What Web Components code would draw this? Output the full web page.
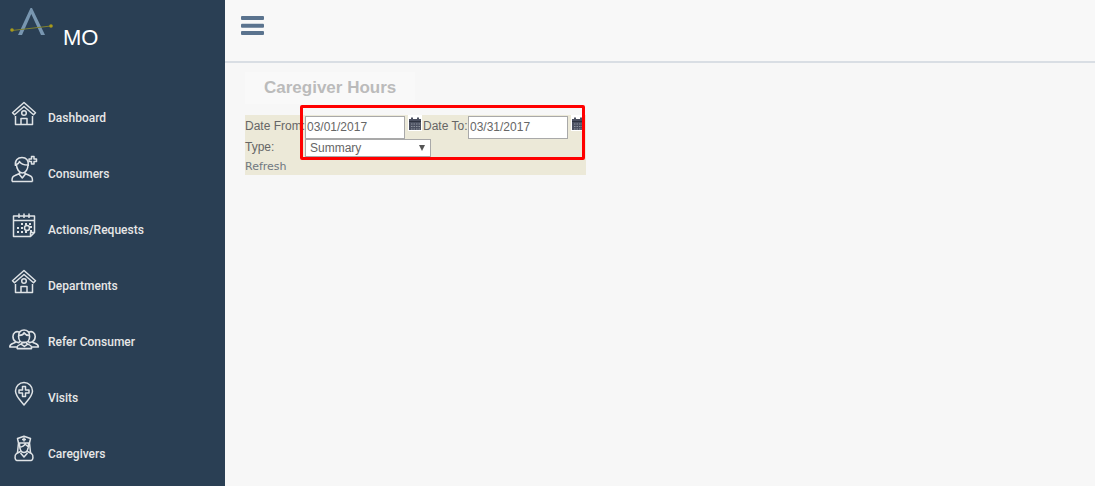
<!DOCTYPE html>
<html lang="en">
<head>
<meta charset="utf-8">
<meta name="viewport" content="width=device-width, initial-scale=1">
<title>Caregiver Hours</title>
<style>
  html, body { margin: 0; }
  body { background: #f7f7f7; color: #666; font: 12px/18px "Liberation Sans", Arial, sans-serif; }
</style>
</head>
<body>
<app-shell>
  <side-nav slot="nav">
    <nav-item icon="house">Dashboard</nav-item>
    <nav-item icon="person">Consumers</nav-item>
    <nav-item icon="calendar">Actions/Requests</nav-item>
    <nav-item icon="house">Departments</nav-item>
    <nav-item icon="group">Refer Consumer</nav-item>
    <nav-item icon="pin">Visits</nav-item>
    <nav-item icon="nurse">Caregivers</nav-item>
  </side-nav>
  <top-bar></top-bar>
  <page-title>Caregiver Hours</page-title>
  <hours-filter></hours-filter>
</app-shell>

<script>
const define = (name, html, setup) => {
  const template = document.createElement('template');
  template.innerHTML = html;
  customElements.define(name, class extends HTMLElement {
    constructor() {
      super();
      this.attachShadow({ mode: 'open' }).append(template.content.cloneNode(true));
    }
    connectedCallback() { if (setup) setup(this, this.shadowRoot); }
  });
};

const icons = {
  house: '<path d="M1.500 11.700 13 1.500l11.500 10.200-2 2L13 5.500l-9.500 8.200zM4.500 15v8.500h17V15M10 23.500v-6h6v6"/><circle cx="13" cy="12" r="2.300"/>',
  person: '<path d="M1 24.500c0-4 .5-5 3-6l4.500-2v-2M21.500 24.500c0-4-.5-5-3-6l-4.500-2v-2M1 24.500h20.500M8 17l3.300 4 3.200-4M4.500 9C3.500 3 7 .5 11 .5c4 0 7 2.500 6.300 8.500M5.500 7.500c0 4 2.500 8.500 5.800 8.500S17 12 17 8C12 8 9.500 6.500 8.500 4.500 8 6.300 7 7 5.500 7.500z"/><path d="M20.500-.5h2.500V2h2.500v2.500H23V7h-2.500V4.500H18V2h2.500z"/>',
  calendar: '<path d="M2.500 3h21v16.500l-4 4h-17zM2.500 7.500h21M19.500 23.500v-4h4M8 .5v4.500M13 .5v4.500M18 .5v4.500"/><circle cx="16" cy="15" r="2.500"/><path stroke-dasharray="2 2" stroke-width="2" d="M10 11h11M6 15h7M6 19h12M20 13v6"/>',
  group: '<g transform="translate(-0.700 0.800) scale(1.060)"><path d="M6.500 21.500v-1.500c0-2.500 5-2 5-4.500h3.500c0 2.500 5 2 5 4.500v1.500zM10.500 17.500l2.800 2 2.800-2M7.800 10C7.500 6 10 4 13 4s5.500 2 5.200 6c0 3.500-2.200 6-5.200 6s-5.200-2.500-5.200-6zM8.500 9c3 0 4-1 4.500-2.500 1 1.500 2.500 2.500 4.500 2.500M8.500 6C5.500 4.500 2.500 6.500 2.500 10c0 2 1 4 2.500 5C4.500 17-.5 16-.5 20H7M5 15l3 1 1.500-2M17.500 6c3-1.500 6 .5 6 4 0 2-1 4-2.500 5 .5 2 5.500 1 5.500 5H20M21 15l-3 1-1.500-2"/></g>',
  pin: '<path d="M13 24C9 19 4.500 15 4.500 10a8.500 8.500 0 0 1 17 0c0 5-4.500 9-8.500 14z"/><path d="M11.500 5.500h3V9H18v3h-3.500v3.500h-3V12H8V9h3.500z"/>',
  nurse: '<g transform="translate(0 -1.500)"><path d="M6.500 3 13 .7 19.500 3l-1 4.500h-11zM13 2v4M11 4h4M7.500 7.500 6.500 17M18.500 7.500l1 9.500M8.500 8c0 5 1.500 9 4.500 9s4.500-4 4.500-9M8.500 11.500c3 0 5-1.500 6-3.500M14.500 9l3 2.500M9.500 16l-4 2c-2.500 2-1.500 7 .5 7h14c2 0 3-5 .5-7l-4-2M9.500 17.500l3.500 4 3.500-4"/></g>'
};

define('app-shell', `
  <style>
    :host { display: grid; grid-template-columns: 225px minmax(0, 1fr); min-height: 100vh; }
    main { min-width: 0; }
  </style>
  <slot name="nav"></slot>
  <main><slot></slot></main>`);

define('side-nav', `
  <style>
    :host { display: flex; flex-direction: column; background: #2a3f54; color: #fff; }
    .brand { display: flex; align-items: flex-start; gap: 9px; padding: 6px 10px 0; height: 80px; }
    .brand svg { width: 44px; height: 32px; }
    .brand span { font-size: 22px; line-height: 26px; margin-top: 19px; }
  </style>
  <div class="brand">
    <svg viewBox="0 0 44 32" aria-hidden="true">
      <path d="M8 29 20.500 2h1.500L35 29h-4L21.300 8 12 29z" fill="#7896b0"/>
      <path d="M2 24.500 41 20" stroke="#80812f" fill="none"/>
      <circle cx="2" cy="24" r="1.800" fill="#a89a1b"/><circle cx="41" cy="20" r="1.800" fill="#a89a1b"/>
    </svg>
    <span>MO</span>
  </div>
  <nav aria-label="Main"><slot></slot></nav>`);

define('nav-item', `
  <style>
    :host { display: block; }
    a { display: flex; align-items: center; gap: 10px; height: 56px; padding: 0 10px; color: #e7e7e7;
        font-family: Roboto, sans-serif; font-weight: 500; text-decoration: none; }
    svg { width: 28px; height: 28px; overflow: visible; fill: none; stroke: #dfe3e6; stroke-width: 1.500; stroke-linejoin: round; }
    span { padding-top: 8px; }
  </style>
  <a href="#"><svg viewBox="-1 -1 28 28" aria-hidden="true"></svg><span><slot></slot></span></a>`,
  (host, root) => {
    root.querySelector('svg').innerHTML = icons[host.getAttribute('icon')];
  });

define('top-bar', `
  <style>
    :host { display: block; padding: 16px 16px 26px; border-bottom: 2px solid #d9dee4; background: #f8f8f8; }
    button { display: block; width: 23px; padding: 0; border: 0; background: none; }
    svg { display: block; }
  </style>
  <button type="button" aria-label="Toggle menu">
    <svg width="23" height="19" viewBox="0 0 23 19" fill="#5a738e" aria-hidden="true">
      <rect width="23" height="4" rx="1"/><rect y="7.700" width="23" height="4" rx="1"/><rect y="15" width="23" height="4" rx="1"/>
    </svg>
  </button>`);

define('page-title', `
  <style>
    :host { display: block; padding: 9px 20px 11px; }
    h1 { width: fit-content; margin: 0; padding: 0 19px; background: #f9f9f9; color: #bbb; font-size: 17px; line-height: 32px; }
  </style>
  <h1><slot></slot></h1>`);

define('hours-filter', `
  <style>
    :host { display: block; position: relative; width: 341px; margin-left: 20px; background: #ece9d8; }
    form { display: grid; grid-template-columns: 60px 1fr; grid-template-rows: 24px 18px 18px; }
    .dates { display: flex; align-items: flex-start; }
    .dates label { margin-left: 1px; width: 45px; }
    label { line-height: 22px; white-space: nowrap; }
    .type { line-height: 16px; }
    input, select { box-sizing: border-box; margin: 0; border: 1px solid #a9a9a9; background: #fff; color: #666; font: inherit; border-radius: 0; }
    input { width: 100px; height: 23px; margin-top: 1px; padding: 0 1px 2px; }
    .select { position: relative; width: 126px; }
    select { display: block; width: 100%; height: 18px; padding: 0 4px; line-height: 14px; appearance: none; }
    .select::after { content: ""; position: absolute; right: 6px; top: 6px; border: solid transparent; border-width: 6px 3px 0; border-top-color: #555; }
    a { grid-column: 1 / -1; color: #6f7780; font: 11px/20px "DejaVu Sans", sans-serif; text-decoration: none; height: 18px; }
    .frame { position: absolute; inset: -10px 1px 15px 55px; border: 3px solid #f00; border-radius: 2px; pointer-events: none; }
  </style>
  <form>
    <label for="from">Date From:</label>
    <div class="dates">
      <input id="from" value="03/01/2017">
      <calendar-button></calendar-button>
      <label for="to">Date To:</label>
      <input id="to" value="03/31/2017">
      <calendar-button></calendar-button>
    </div>
    <label class="type" for="type">Type:</label>
    <div class="select"><select id="type"><option>Summary</option></select></div>
    <a href="#">Refresh</a>
  </form>
  <div class="frame"></div>`);

define('calendar-button', `
  <style>
    :host { display: block; margin-left: 3px; width: 14px; }
    button { display: block; width: 14px; height: 16px; padding: 0; border: 0; background: #fff; }
    svg { display: block; }
  </style>
  <button type="button" aria-label="Choose date">
    <svg width="14" height="16" viewBox="0 0 14 16" aria-hidden="true">
      <path d="M1 4h12v11H1zM3 2.500h2V4H3zM9 2.500h2V4H9z" fill="#4b5060"/>
      <path d="M1 6.500h12" stroke="#2e3340"/>
      <path d="M3 9h9M3 11.500h9M3 14h9" stroke="#8f949e" stroke-dasharray="1.500 1"/>
    </svg>
  </button>`);
</script>
</body>
</html>
